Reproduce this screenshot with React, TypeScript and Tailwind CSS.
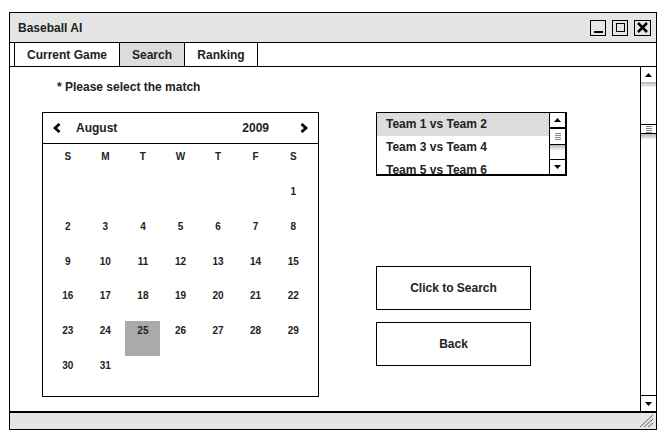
import React from "react";

const font = { fontFamily: '"Liberation Sans", Arial, sans-serif' };

function UpTri() {
  return (
    <svg width="7" height="4" viewBox="0 0 7 4">
      <polygon points="3.5,0 7,4 0,4" fill="#000" />
    </svg>
  );
}
function DownTri() {
  return (
    <svg width="7" height="4" viewBox="0 0 7 4">
      <polygon points="0,0 7,0 3.5,4" fill="#000" />
    </svg>
  );
}

function Chevron({ dir }: { dir: "left" | "right" }) {
  return (
    <svg width="8" height="10" viewBox="0 0 8 10">
      {dir === "left" ? (
        <polyline points="6.5,1 2,5 6.5,9" fill="none" stroke="#000" strokeWidth="2.8" />
      ) : (
        <polyline points="1.5,1 6,5 1.5,9" fill="none" stroke="#000" strokeWidth="2.8" />
      )}
    </svg>
  );
}

function Thumb({ h }: { h: string }) {
  return (
    <div className={`${h} border-y border-black bg-white flex flex-col items-center justify-center gap-[1px]`}>
      <div className="w-[6px] h-px bg-[#888]" />
      <div className="w-[6px] h-px bg-[#888]" />
      <div className="w-[6px] h-px bg-[#888]" />
      <div className="w-[6px] h-px bg-[#888]" />
    </div>
  );
}

const days: (number | null)[] = [
  null, null, null, null, null, null, 1,
  ...Array.from({ length: 31 - 1 }, (_, i) => i + 2),
];

export default function App() {
  const cells = [...days];
  while (cells.length < 42) cells.push(null);
  return (
    <div className="w-[668px] h-[439px] bg-white pt-[12px] pl-[9px]" style={font}>
      <div className="w-[648px] h-[418px] border border-black flex flex-col text-[#222]">
        {/* Title bar */}
        <div className="h-[30px] shrink-0 bg-[#e5e5e5] border-b border-black flex items-center pl-[8px] pr-[5px]">
          <div className="text-[12px] font-bold flex-1">Baseball AI</div>
          <div className="flex gap-[6px]">
            <div className="w-[16px] h-[16px] border border-black flex items-end justify-center pb-[2px]">
              <div className="w-[9px] h-[2px] bg-black" />
            </div>
            <div className="w-[16px] h-[16px] border border-black flex items-center justify-center">
              <div className="w-[9px] h-[9px] border border-black" />
            </div>
            <div className="w-[17px] h-[16px] border border-black flex items-center justify-center">
              <svg width="11" height="11" viewBox="0 0 11 11">
                <line x1="1" y1="1" x2="10" y2="10" stroke="#000" strokeWidth="2.5" />
                <line x1="10" y1="1" x2="1" y2="10" stroke="#000" strokeWidth="2.5" />
              </svg>
            </div>
          </div>
        </div>
        {/* Tabs */}
        <div className="h-[24px] shrink-0 border-b border-black flex pl-[4px] text-[12px] font-bold">
          <div className="w-[105px] border-l border-black flex items-center justify-center">Current Game</div>
          <div className="w-[65px] border-l border-black bg-[#dcdcdc] flex items-center justify-center">Search</div>
          <div className="w-[74px] border-l border-r border-black flex items-center justify-center">Ranking</div>
        </div>
        {/* Content */}
        <div className="flex-1 flex min-h-0">
          <div className="flex-1 flex flex-col pl-[32px]">
            <div className="mt-[13px] pl-[15px] h-[14px] leading-[14px] text-[12px] font-bold">* Please select the match</div>
            <div className="mt-[18px] flex">
              {/* Calendar */}
              <div className="w-[277px] h-[285px] border border-black flex flex-col">
                <div className="h-[31px] border-b border-black flex items-center pl-[10px] pr-[10px] text-[12px] font-bold">
                  <Chevron dir="left" />
                  <span className="ml-[15px]">August</span>
                  <span className="flex-1" />
                  <span>2009</span>
                  <span className="ml-[31px] flex">
                    <Chevron dir="right" />
                  </span>
                </div>
                <div className="px-[6px] grid grid-cols-7 text-[10px] font-bold leading-[12px]">
                  {["S", "M", "T", "W", "T", "F", "S"].map((d, i) => (
                    <div key={i} className="h-[38px] pt-[7px] text-center">{d}</div>
                  ))}
                  {cells.map((d, i) => (
                    <div key={i} className="h-[34.75px] flex justify-center">
                      {d === 25 ? (
                        <div className="w-[35px] h-[35px] bg-[#aaaaaa] pt-[4px] text-center">{d}</div>
                      ) : (
                        <div className="pt-[4px] text-center">{d ?? ""}</div>
                      )}
                    </div>
                  ))}
                </div>
              </div>
              {/* Right column */}
              <div className="ml-[57px] flex flex-col">
                <div className="w-[191px] h-[64px] border-t border-l border-r-2 border-b-2 border-black flex overflow-hidden">
                  <div className="flex-1 flex flex-col text-[12px] font-bold">
                    <div className="h-[23px] shrink-0 leading-[23px] pl-[9px] bg-[#dddddd]">Team 1 vs Team 2</div>
                    <div className="h-[23px] shrink-0 leading-[23px] pl-[9px]">Team 3 vs Team 4</div>
                    <div className="h-[23px] shrink-0 leading-[23px] pl-[9px]">Team 5 vs Team 6</div>
                  </div>
                  <div className="w-[16px] border-l border-black flex flex-col">
                    <div className="h-[15px] shrink-0 flex items-center justify-center border-b border-black">
                      <UpTri />
                    </div>
                    <Thumb h="h-[17px] shrink-0" />
                    <div className="h-[5px] shrink-0 bg-gradient-to-b from-[#b5b5b5] to-[#f2f2f2]" />
                    <div className="flex-1" />
                    <div className="h-[15px] shrink-0 border-t border-black flex items-center justify-center">
                      <DownTri />
                    </div>
                  </div>
                </div>
                <div className="mt-[90px] w-[155px] h-[44px] border border-black flex items-center justify-center text-[12px] font-bold">
                  Click to Search
                </div>
                <div className="mt-[12px] w-[155px] h-[44px] border border-black flex items-center justify-center text-[12px] font-bold">
                  Back
                </div>
              </div>
            </div>
          </div>
          {/* Main scrollbar */}
          <div className="w-[16px] border-l border-black flex flex-col">
            <div className="h-[15px] shrink-0 flex items-center justify-center">
              <UpTri />
            </div>
            <div className="h-[5px] shrink-0 bg-gradient-to-b from-[#b5b5b5] to-[#f2f2f2]" />
            <div className="h-[37px] shrink-0" />
            <Thumb h="h-[10px] shrink-0" />
            <div className="h-[5px] shrink-0 bg-gradient-to-b from-[#b5b5b5] to-[#f2f2f2]" />
            <div className="flex-1" />
            <div className="h-[16px] shrink-0 border-t border-black flex items-center justify-center">
              <DownTri />
            </div>
          </div>
        </div>
        {/* Status bar */}
        <div className="h-[18px] shrink-0 border-t-2 border-black bg-[#e5e5e5] flex justify-end items-center pr-[2px]">
          <svg width="16" height="13" viewBox="0 0 16 13">
            <line x1="15" y1="0" x2="2" y2="12" stroke="#666" strokeWidth="1" />
            <line x1="15" y1="4" x2="6" y2="12" stroke="#666" strokeWidth="1" />
            <line x1="15" y1="8" x2="10" y2="12" stroke="#666" strokeWidth="1" />
          </svg>
        </div>
      </div>
    </div>
  );
}
